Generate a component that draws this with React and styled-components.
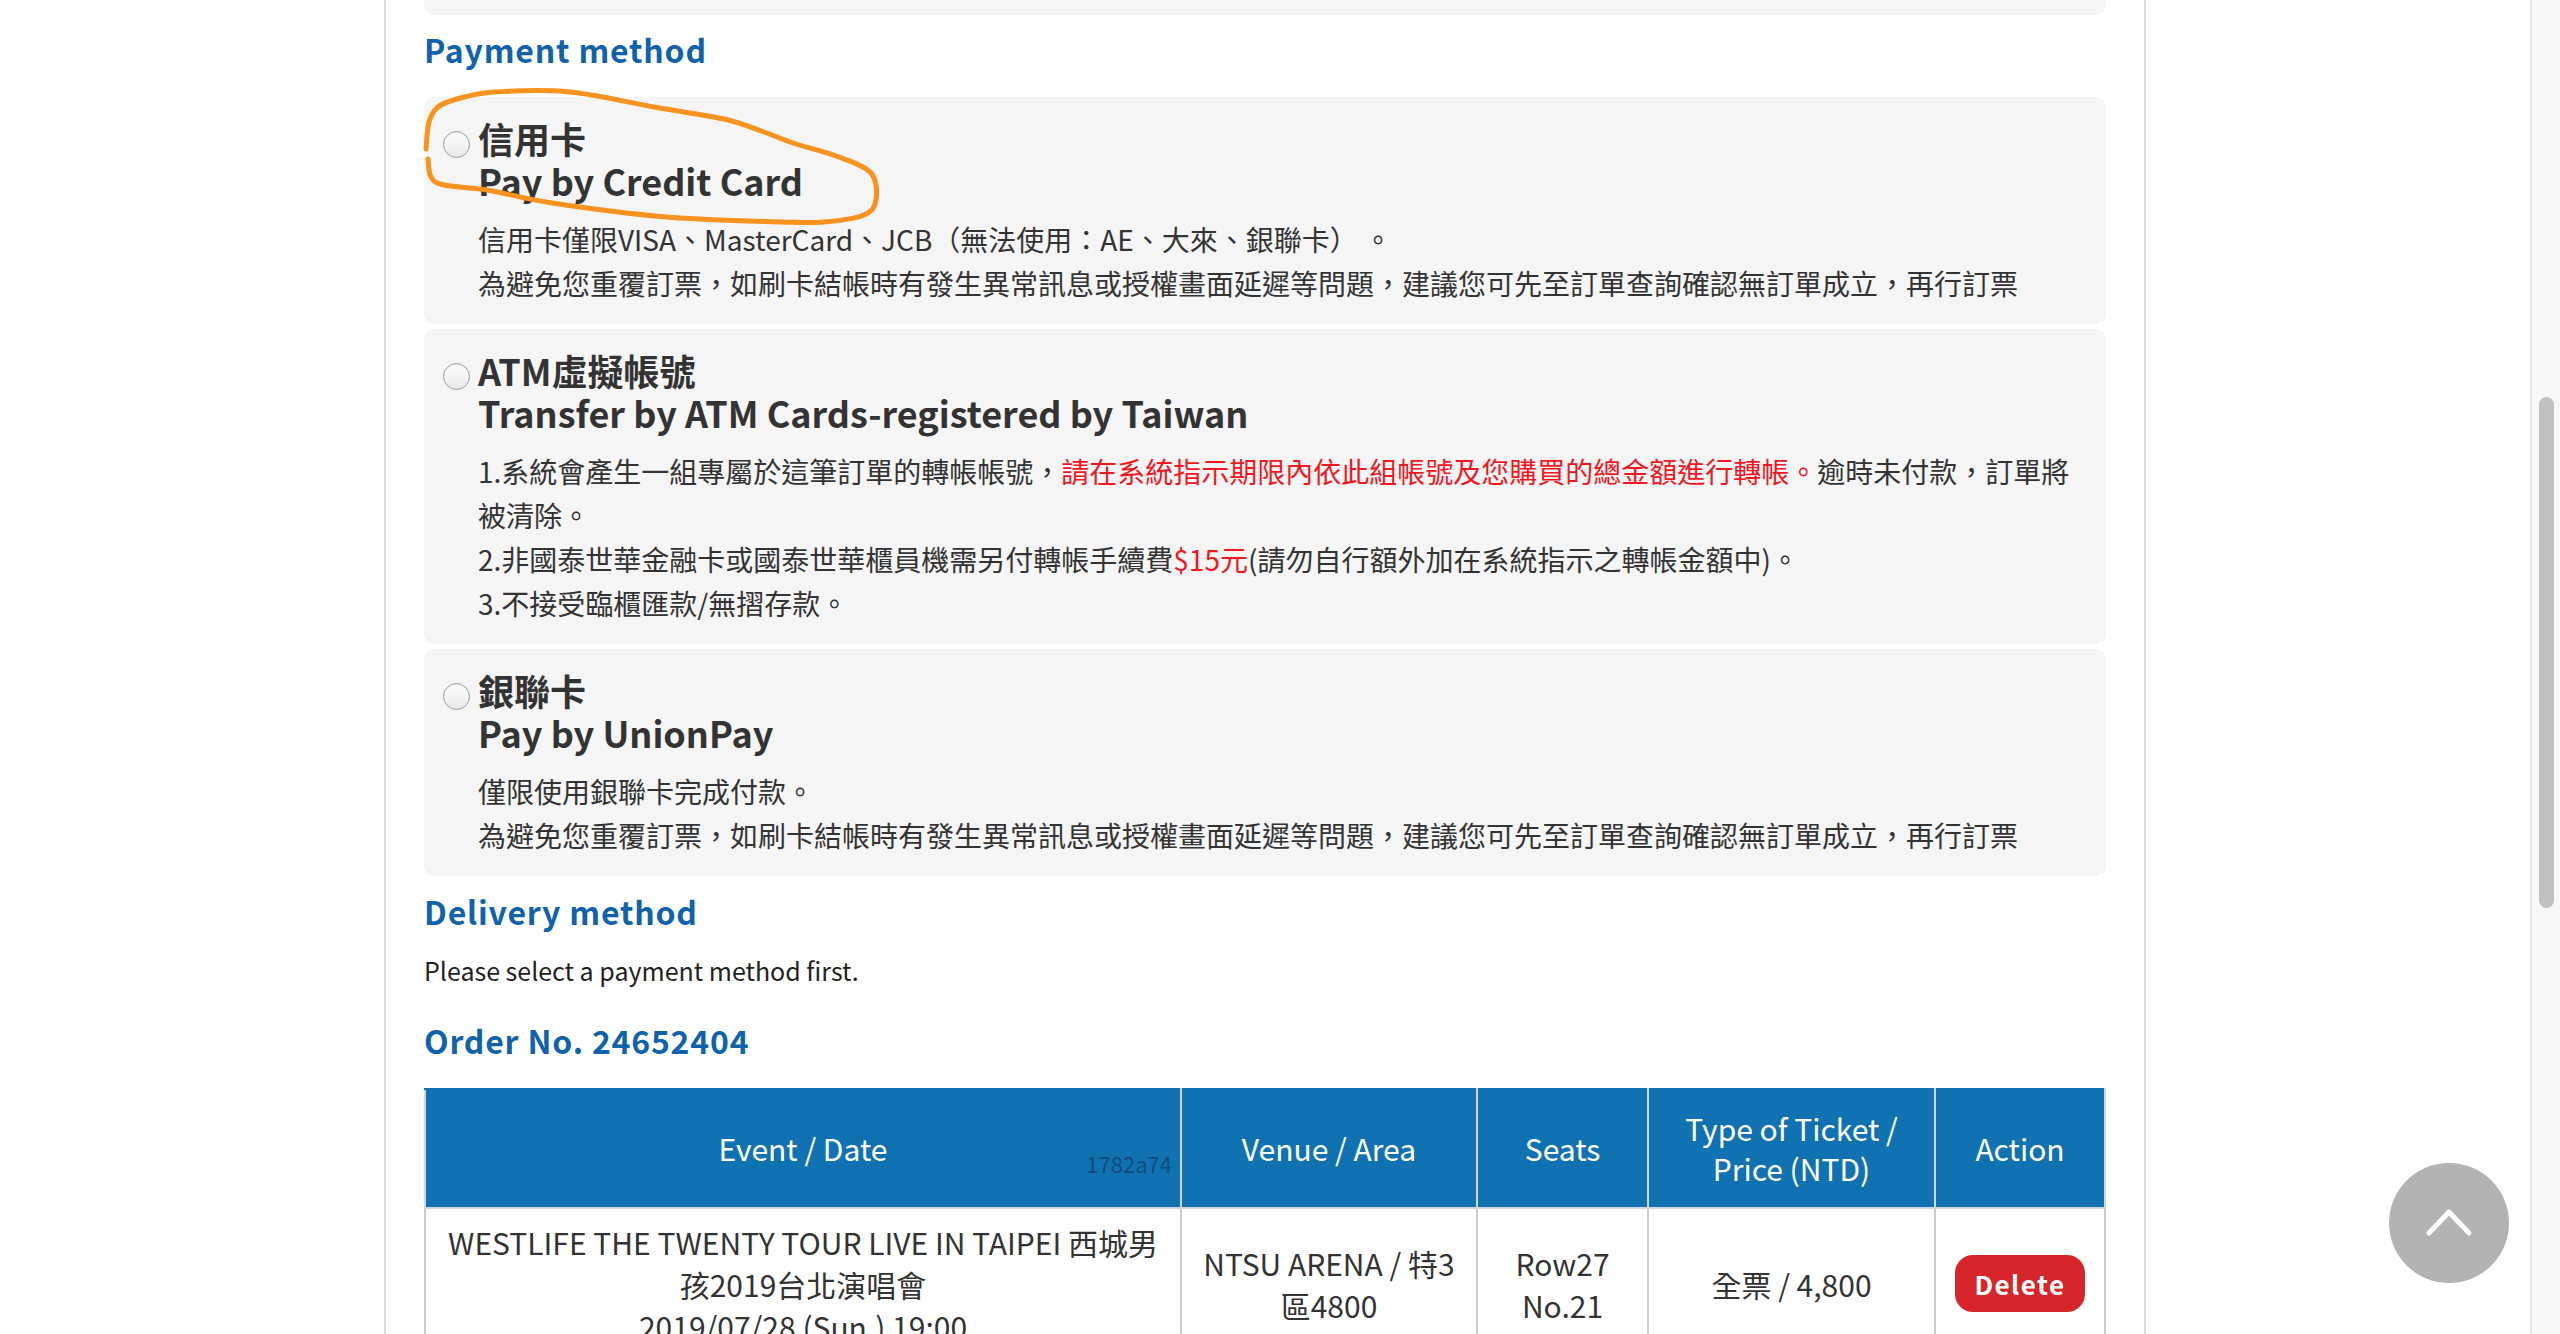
import React from 'react';
import styled, { createGlobalStyle } from 'styled-components';

const GlobalStyle = createGlobalStyle`
  html, body {
    margin: 0;
    padding: 0;
    height: 100%;
    overflow: hidden;
    background: #fff;
  }
  body {
    font-family: "Noto Sans CJK TC", "Noto Sans", sans-serif;
    color: #333;
  }
`;

const Screen = styled.div`
  display: flex;
  height: 100vh;
  overflow: hidden;
`;

const Viewport = styled.div`
  flex: 1;
  min-width: 0;
  overflow: hidden;
`;

const Panel = styled.main`
  box-sizing: border-box;
  width: 1762px;
  min-height: 100%;
  margin: 0 auto;
  padding: 0 38px;
  background: #fff;
  border-left: 2px solid #dcdcdc;
  border-right: 2px solid #dcdcdc;
`;

const PrevCardTail = styled.div`
  height: 15px;
  background: #f5f5f5;
  border-radius: 0 0 10px 10px;
`;

const SectionTitle = styled.h2`
  margin: ${(p) => p.$top || 0}px 0 ${(p) => p.$bottom || 0}px;
  font-size: 32px;
  line-height: 48px;
  font-weight: 700;
  letter-spacing: 0.8px;
  color: #1062aa;
`;

const MethodList = styled.div`
  display: flex;
  flex-direction: column;
  gap: 5px;
`;

const MethodCard = styled.label`
  position: relative;
  display: flex;
  align-items: flex-start;
  padding: 20px 30px 19px 19px;
  background: #f5f5f5;
  border-radius: 10px;
`;

const Radio = styled.input`
  appearance: none;
  flex-shrink: 0;
  box-sizing: border-box;
  width: 27px;
  height: 27px;
  margin: 14px 8px 0 0;
  border-radius: 50%;
  border: 1.5px solid #9c9c9c;
  background: linear-gradient(#ffffff, #e8e8e8);
  box-shadow: inset 0 1px 1px rgba(0, 0, 0, 0.08);
`;

const MethodBody = styled.div`
  flex: 1;
  min-width: 0;
`;

const MethodTitle = styled.div`
  font-size: 36px;
  line-height: 42px;
  font-weight: 700;
  color: #333;
`;

const MethodDesc = styled.div`
  margin-top: 16px;
  font-size: 28px;
  line-height: 44px;
  color: #333;
`;

const Warn = styled.span`
  color: #f2161f;
`;

const Scribble = styled.svg`
  position: absolute;
  left: 0;
  top: 0;
  overflow: visible;
  pointer-events: none;
`;

const Note = styled.p`
  margin: 0 0 24px;
  font-size: 25px;
  line-height: 41.6px;
  color: #222;
`;

const OrderTable = styled.table`
  width: 100%;
  border-collapse: collapse;
  table-layout: fixed;
`;

// width is the content width: the column also takes 30px padding and 2px border
const HeadCell = styled.th`
  position: relative;
  width: ${(p) => p.$w - 32}px;
  height: 117px;
  padding: 0 15px;
  background: #1172b2;
  color: #fff;
  font-size: 30px;
  line-height: 40px;
  font-weight: 400;
  border: 2px solid #cfd6dd;
  border-top-color: #1172b2;
`;

const BuildTag = styled.span`
  position: absolute;
  right: 8px;
  bottom: 33px;
  font-size: 22px;
  line-height: 22px;
  color: #0f4c7c;
`;

const BodyCell = styled.td`
  padding: 12px 15px;
  text-align: center;
  vertical-align: middle;
  font-size: 30px;
  line-height: 42px;
  color: #333;
  border: 2px solid #cccccc;
`;

const DeleteButton = styled.button`
  width: 130px;
  height: 57px;
  border: none;
  border-radius: 18px;
  background: #d7262b;
  color: #fff;
  font-family: inherit;
  font-size: 26px;
  font-weight: 700;
  letter-spacing: 1.5px;
`;

const ScrollTopButton = styled.button`
  position: fixed;
  right: 51px;
  bottom: 51px;
  width: 120px;
  height: 120px;
  padding: 0;
  border: none;
  border-radius: 50%;
  background: #b3b3b3;
  display: flex;
  align-items: center;
  justify-content: center;
`;

const ScrollTrack = styled.div`
  flex-shrink: 0;
  box-sizing: border-box;
  width: 30px;
  padding-top: 397px;
  background: #f8f8f8;
  border-left: 2px solid #e6e6e6;
`;

const ScrollThumb = styled.div`
  width: 15px;
  height: 511px;
  margin: 0 auto;
  border-radius: 8px;
  background: #c1c1c1;
`;

// hand drawn loop round the credit card title, in card coordinates
const loopPoints = [
  [2, 52], [5, 25], [14, 10], [33, 2], [70, -5], [146, -5], [230, 10],
  [300, 22], [340, 35], [369, 46], [415, 60], [447, 76], [452, 103],
  [440, 118], [400, 125], [358, 125], [243, 120], [128, 106], [63, 93],
  [20, 88], [7, 80], [4, 62],
];

function smoothPath(pts) {
  let d = `M${pts[0][0]} ${pts[0][1]}`;
  for (let i = 0; i < pts.length - 1; i++) {
    const p0 = pts[i - 1] || pts[i];
    const p1 = pts[i];
    const p2 = pts[i + 1];
    const p3 = pts[i + 2] || p2;
    const c1 = [p1[0] + (p2[0] - p0[0]) / 6, p1[1] + (p2[1] - p0[1]) / 6];
    const c2 = [p2[0] - (p3[0] - p1[0]) / 6, p2[1] - (p3[1] - p1[1]) / 6];
    d += ` C${c1[0]} ${c1[1]} ${c2[0]} ${c2[1]} ${p2[0]} ${p2[1]}`;
  }
  return d;
}

const repeatWarning =
  '為避免您重覆訂票，如刷卡結帳時有發生異常訊息或授權畫面延遲等問題，建議您可先至訂單查詢確認無訂單成立，再行訂票';

function App() {
  return (
    <Screen>
      <GlobalStyle />
      <Viewport>
        <Panel>
          <PrevCardTail />
          <SectionTitle $top={10} $bottom={24}>Payment method</SectionTitle>
          <MethodList>
            <MethodCard>
              <Radio type="radio" name="payment" />
              <MethodBody>
                <MethodTitle>
                  信用卡
                  <br />
                  Pay by Credit Card
                </MethodTitle>
                <MethodDesc>
                  信用卡僅限VISA、MasterCard、JCB（無法使用：AE、大來、銀聯卡） 。
                  <br />
                  {repeatWarning}
                </MethodDesc>
              </MethodBody>
              <Scribble width="460" height="135">
                <path
                  d={smoothPath(loopPoints)}
                  fill="none"
                  stroke="#f7931e"
                  strokeWidth="5"
                  strokeLinecap="round"
                  strokeLinejoin="round"
                />
              </Scribble>
            </MethodCard>

            <MethodCard>
              <Radio type="radio" name="payment" />
              <MethodBody>
                <MethodTitle>
                  ATM虛擬帳號
                  <br />
                  Transfer by ATM Cards-registered by Taiwan
                </MethodTitle>
                <MethodDesc>
                  1.系統會產生一組專屬於這筆訂單的轉帳帳號，
                  <Warn>請在系統指示期限內依此組帳號及您購買的總金額進行轉帳。</Warn>
                  逾時未付款，訂單將被清除。
                  <br />
                  2.非國泰世華金融卡或國泰世華櫃員機需另付轉帳手續費<Warn>$15元</Warn>(請勿自行額外加在系統指示之轉帳金額中)。
                  <br />
                  3.不接受臨櫃匯款/無摺存款。
                </MethodDesc>
              </MethodBody>
            </MethodCard>

            <MethodCard>
              <Radio type="radio" name="payment" />
              <MethodBody>
                <MethodTitle>
                  銀聯卡
                  <br />
                  Pay by UnionPay
                </MethodTitle>
                <MethodDesc>
                  僅限使用銀聯卡完成付款。
                  <br />
                  {repeatWarning}
                </MethodDesc>
              </MethodBody>
            </MethodCard>
          </MethodList>

          <SectionTitle $top={11} $bottom={15}>Delivery method</SectionTitle>
          <Note>Please select a payment method first.</Note>

          <SectionTitle $bottom={24}>Order No. 24652404</SectionTitle>
          <OrderTable>
            <thead>
              <tr>
                <HeadCell $w={756}>
                  Event / Date
                  <BuildTag>1782a74</BuildTag>
                </HeadCell>
                <HeadCell $w={296}>Venue / Area</HeadCell>
                <HeadCell $w={171}>Seats</HeadCell>
                <HeadCell $w={287}>Type of Ticket / Price (NTD)</HeadCell>
                <HeadCell $w={170}>Action</HeadCell>
              </tr>
            </thead>
            <tbody>
              <tr>
                <BodyCell>
                  WESTLIFE THE TWENTY TOUR LIVE IN TAIPEI 西城男孩2019台北演唱會
                  <br />
                  2019/07/28 (Sun.) 19:00
                </BodyCell>
                <BodyCell>NTSU ARENA / 特3區4800</BodyCell>
                <BodyCell>
                  Row27
                  <br />
                  No.21
                </BodyCell>
                <BodyCell>全票 / 4,800</BodyCell>
                <BodyCell>
                  <DeleteButton>Delete</DeleteButton>
                </BodyCell>
              </tr>
            </tbody>
          </OrderTable>
        </Panel>
      </Viewport>
      <ScrollTrack>
        <ScrollThumb />
      </ScrollTrack>
      <ScrollTopButton aria-label="Back to top">
        <svg width="120" height="120" viewBox="0 0 120 120">
          <path
            d="M40 70 L60 49 L80 70"
            fill="none"
            stroke="#fff"
            strokeWidth="5"
            strokeLinecap="round"
            strokeLinejoin="round"
          />
        </svg>
      </ScrollTopButton>
    </Screen>
  );
}

export default App;
